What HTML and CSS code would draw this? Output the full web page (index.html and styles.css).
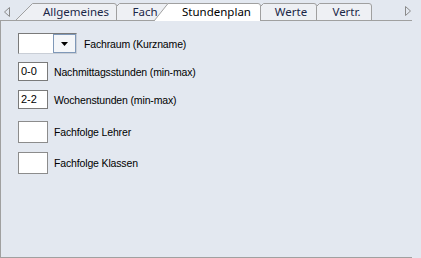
FILE: index.html
```html
<!DOCTYPE html>
<html lang="de">
<head>
  <meta charset="UTF-8">
  <title>Fach - Stundenplan</title>
  <link rel="stylesheet" href="styles.css">
</head>
<body>
  <!-- Tab strip -->
  <div class="tabs">
    <span class="scroll scroll-left">
      <svg width="6" height="10" viewBox="0 0 6 10"><path d="M5.5 0.5 L0.5 5 L5.5 9.5 Z" fill="none" stroke="#8a8a8a"/></svg>
    </span>
    <div class="tab tab-first">
      <svg class="tab-shape" width="101" height="17"><path d="M0 17 L16.5 0.5 H98 Q100.5 0.5 100.5 3 V17" /></svg>
      <span class="tab-label">Allgemeines</span>
    </div>
    <div class="tab tab-fach">
      <svg class="tab-shape" width="52" height="17"><path d="M0.5 17 V3.5 L3.5 0.5 H51.5 V17" /></svg>
      <span class="tab-label">Fach</span>
    </div>
    <div class="tab tab-active">
      <svg class="tab-shape" width="107" height="18"><path d="M0 18 L14 0.5 H104 Q106.5 0.5 106.5 3 V18" /></svg>
      <span class="tab-label">Stundenplan</span>
    </div>
    <div class="tab tab-werte">
      <svg class="tab-shape" width="57" height="17"><path d="M0.5 17 V3.5 L3.5 0.5 H54 Q56.5 0.5 56.5 3 V17" /></svg>
      <span class="tab-label">Werte</span>
    </div>
    <div class="tab tab-vertr">
      <svg class="tab-shape" width="56" height="17"><path d="M0.5 17 V3.5 L3.5 0.5 H53 Q55.5 0.5 55.5 3 V17" /></svg>
      <span class="tab-label">Vertr.</span>
    </div>
    <span class="scroll scroll-right">
      <svg width="6" height="10" viewBox="0 0 6 10"><path d="M0.5 0.5 L5.5 5 L0.5 9.5 Z" fill="none" stroke="#8a8a8a"/></svg>
    </span>
  </div>

  <!-- Tab page -->
  <div class="panel">
    <div class="row row-combo">
      <div class="combo">
        <div class="combo-text"></div>
        <div class="combo-btn">
          <svg width="7" height="4" viewBox="0 0 7 4"><path d="M0 0 H7 L3.5 4 Z" fill="#000"/></svg>
        </div>
      </div>
      <span class="label label-combo">Fachraum (Kurzname)</span>
    </div>
    <div class="row row-2">
      <div class="field">0-0</div>
      <span class="label">Nachmittagsstunden (min-max)</span>
    </div>
    <div class="row row-3">
      <div class="field">2-2</div>
      <span class="label">Wochenstunden (min-max)</span>
    </div>
    <div class="row row-4">
      <div class="field field-big"></div>
      <span class="label">Fachfolge Lehrer</span>
    </div>
    <div class="row row-5">
      <div class="field field-big"></div>
      <span class="label">Fachfolge Klassen</span>
    </div>
  </div>
</body>
</html>
```

FILE: styles.css
```css
body {
  margin: 0;
  background-color: #e3e8f0;
  font-family: "Liberation Sans", Arial, sans-serif;
  color: #000;
}

/* Tab strip */
.tabs {
  display: flex;
  align-items: flex-end;
  width: 412px;
  height: 20px;
  border-bottom: 1px solid #a0a0a0;
}

.scroll {
  display: flex;
  align-self: flex-start;
}

.scroll-left {
  width: 12px;
  padding-left: 4px;
  margin-top: 7px;
}

.scroll-right {
  margin-left: auto;
  margin-right: 1px;
  margin-top: 6px;
}

.tab {
  position: relative;
  display: flex;
  align-items: center;
  justify-content: center;
  height: 17px;
  font-family: "Noto Sans", sans-serif;
  font-size: 11.5px;
  color: #1b2747;
}

.tab-shape {
  position: absolute;
  top: 0;
  left: 0;
}

.tab-shape path {
  fill: #eef0f4;
  stroke: #a0a0a0;
  stroke-width: 1;
}

.tab-label {
  position: relative;
  line-height: 17px;
}

.tab-first {
  width: 101px;
  padding-left: 19px;
  box-sizing: border-box;
}

.tab-fach {
  width: 52px;
  margin-left: -1px;
  padding-left: 6px;
  box-sizing: border-box;
}

.tab-active {
  z-index: 2;
  width: 107px;
  height: 18px;
  margin-left: -14px;
  margin-bottom: -1px;
  padding-left: 18px;
  box-sizing: border-box;
  color: #000;
}

.tab-active .tab-shape path {
  fill: #ffffff;
}

.tab-active .tab-label {
  line-height: 18px;
  padding-bottom: 1px;
}

.tab-werte {
  width: 57px;
  margin-left: -1px;
  padding-left: 5px;
  box-sizing: border-box;
}

.tab-vertr {
  width: 56px;
  margin-left: -1px;
  padding-left: 5px;
  box-sizing: border-box;
}

/* Tab page */
.panel {
  box-sizing: border-box;
  width: 412px;
  height: 237px;
  border-left: 1px solid #a0a0a0;
  border-bottom: 1px solid #a0a0a0;
  padding: 12px 0 0 17px;
  display: flex;
  flex-direction: column;
}

.row {
  display: flex;
  align-items: center;
  gap: 6px;
}

.row-2 { margin-top: 8px; }
.row-3 { margin-top: 9px; }
.row-4 { margin-top: 12px; }
.row-5 { margin-top: 9px; }

.label {
  font-size: 10.5px;
  letter-spacing: -0.15px;
}

.label-combo {
  margin-left: 1px;
}

.combo {
  display: flex;
  box-sizing: border-box;
  width: 59px;
  height: 21px;
  border: 1px solid;
  border-color: #7a7a7a #c9ced6 #c9ced6 #7a7a7a;
  background: #fff;
}

.combo-text {
  flex: 1;
}

.combo-btn {
  display: flex;
  align-items: center;
  justify-content: center;
  box-sizing: border-box;
  width: 23px;
  height: 19px;
  border: 1px solid #7f98b8;
  background: #f4f6f9;
}

.field {
  box-sizing: border-box;
  width: 30px;
  height: 19px;
  border: 1px solid #7a7a7a;
  background: #fff;
  padding-left: 2px;
  font-size: 11px;
  line-height: 17px;
}

.field-big {
  height: 22px;
  border-color: #8c8c8c;
}
```
